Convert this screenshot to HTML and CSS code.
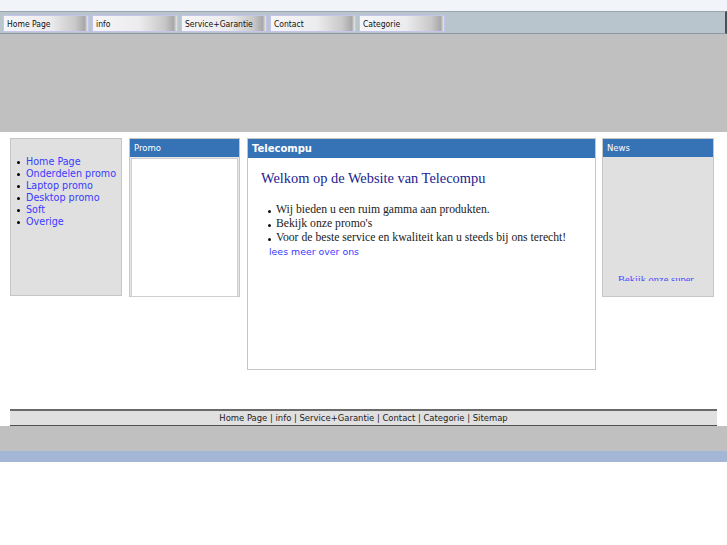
FILE: index.html
```html
<!DOCTYPE html>
<html>
<head>
<meta charset="utf-8">
<link rel="stylesheet" href="styles.css">
</head>
<body>
<div class="topstrip"></div>
<div class="navbar">
  <a class="navbtn">Home Page</a>
  <a class="navbtn">info</a>
  <a class="navbtn">Service+Garantie</a>
  <a class="navbtn">Contact</a>
  <a class="navbtn">Categorie</a>
</div>
<div class="banner"></div>
<div class="main">
  <div class="box leftbox">
    <ul class="menu">
      <li>Home Page</li>
      <li>Onderdelen promo</li>
      <li>Laptop promo</li>
      <li>Desktop promo</li>
      <li>Soft</li>
      <li>Overige</li>
    </ul>
  </div>
  <div class="box promo">
    <div class="head">Promo</div>
    <div class="promobody"></div>
  </div>
  <div class="box center">
    <div class="head bold">Telecompu</div>
    <div class="content">
      <h1>Welkom op de Website van Telecompu</h1>
      <ul class="points">
        <li>Wij bieden u een ruim gamma aan produkten.</li>
        <li>Bekijk onze promo's</li>
        <li>Voor de beste service en kwaliteit kan u steeds bij ons terecht!</li>
      </ul>
      <a class="more">lees meer over ons</a>
    </div>
  </div>
  <div class="box news">
    <div class="head">News</div>
    <div class="newsbody"><div class="ticker">Bekijk onze super</div></div>
  </div>
</div>
<div class="footer">Home Page | info | Service+Garantie | Contact | Categorie | Sitemap</div>
<div class="greyband"></div>
<div class="blueband"></div>
</body>
</html>
```
FILE: styles.css
```css
html, body { margin: 0; padding: 0; background: #fff; }
body { font-family: "DejaVu Sans", sans-serif; }

.topstrip { height: 11px; background: #f1f4f9; }
.navbar {
  height: 21px;
  background: #b9c5cd;
  border-top: 1px solid #9aa5ad;
  border-bottom: 1px solid #8e979d;
  border-right: 2px solid #4a5058;
  display: flex;
  align-items: center;
  gap: 3px;
  padding-left: 3px;
  box-sizing: content-box;
}
.navbtn {
  width: 81px;
  height: 15px;
  margin-top: 1px;
  border: 1px solid #c4c4ec;
  background: linear-gradient(to right, #f6f6f8 0%, #ececee 55%, #c8c8c8 85%, #a8a8a8 96%, #e8e8e8 100%);
  font-family: "DejaVu Sans Condensed", "DejaVu Sans", sans-serif;
  font-size: 8.5px;
  line-height: 16px;
  padding-left: 3px;
  color: #111;
}
.banner { height: 98px; background: #c0c0c0; }

.main {
  display: flex;
  align-items: flex-start;
  padding: 6px 0 0 10px;
  height: 271px;
}
.box { box-sizing: border-box; border: 1px solid #c6c6c6; }
.leftbox { width: 112px; height: 158px; background: #e0e0e0; margin-right: 7px; padding-top: 17px; }
.menu { margin: 0; padding: 0 0 0 15px; list-style: none; font-size: 9.6px; line-height: 12px; color: #3a3aff; }
.menu li { position: relative; }
.menu li::before {
  content: "";
  position: absolute;
  left: -9px;
  top: 5px;
  width: 3px;
  height: 3px;
  border-radius: 50%;
  background: #000;
}

.head {
  background: #3572b6;
  color: #fff;
  height: 18px;
  line-height: 18px;
  font-size: 8.5px;
  padding-left: 4px;
}
.head.bold { font-weight: bold; font-size: 10px; height: 19px; line-height: 19px; }
.promo { width: 111px; height: 159px; margin-right: 7px; background: #e6e6e6; padding: 0 1px 1px 1px; }
.promo .head { margin: 0 -1px; }
.promobody { background: #fff; border: 1px solid #cfcfcf; height: 137px; margin-top: 1px; }

.center { width: 349px; height: 232px; margin-right: 6px; background: #fff; }
.content { padding: 10px 0 0 13px; }
.content h1 {
  margin: 0;
  font-family: "Liberation Serif", serif;
  font-weight: normal;
  font-size: 14.4px;
  color: #22228f;
  line-height: 21px;
}
.points {
  margin: 14px 0 0 0;
  padding-left: 15px;
  list-style: none;
  font-family: "Liberation Serif", serif;
  font-size: 11.7px;
  line-height: 14px;
  color: #222;
}
.points li { position: relative; }
.points li::before {
  content: "";
  position: absolute;
  left: -8px;
  top: 7px;
  width: 3px;
  height: 3px;
  border-radius: 50%;
  background: #111;
}
.more { display: block; margin-left: 8px; font-size: 9.4px; line-height: 13px; color: #3a3aff; }

.news { width: 112px; height: 159px; background: #e0e0e0; }
.newsbody { height: 124px; overflow: hidden; position: relative; }
.ticker {
  position: absolute;
  top: 117px;
  left: 15px;
  font-family: "Liberation Serif", serif;
  font-size: 10.5px;
  color: #4a4aff;
  white-space: nowrap;
}

.footer {
  margin: 0 10px;
  height: 14px;
  background: #e0e0e0;
  border-top: 2px solid #6a6a6a;
  border-bottom: 1px solid #505050;
  text-align: center;
  font-family: "DejaVu Sans Condensed", "DejaVu Sans", sans-serif;
  font-size: 9.4px;
  line-height: 14px;
  color: #222;
}
.greyband { height: 25px; background: #c0c0c0; }
.blueband { height: 11px; background: #a4b6d5; }
```
